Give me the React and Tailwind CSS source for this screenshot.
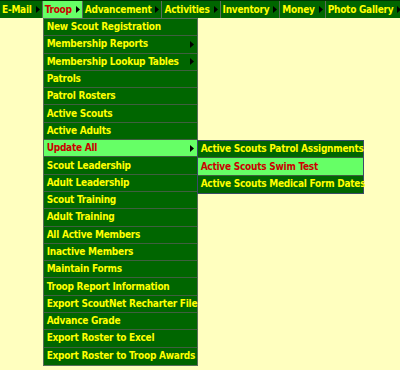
import React from 'react';

const topItems = ['E-Mail', 'Troop', 'Advancement', 'Activities', 'Inventory', 'Money', 'Photo Gallery'];

const troopItems = [
  { label: 'New Scout Registration' },
  { label: 'Membership Reports', sub: true },
  { label: 'Membership Lookup Tables', sub: true },
  { label: 'Patrols' },
  { label: 'Patrol Rosters' },
  { label: 'Active Scouts' },
  { label: 'Active Adults' },
  { label: 'Update All', sub: true, active: true },
  { label: 'Scout Leadership' },
  { label: 'Adult Leadership' },
  { label: 'Scout Training' },
  { label: 'Adult Training' },
  { label: 'All Active Members' },
  { label: 'Inactive Members' },
  { label: 'Maintain Forms' },
  { label: 'Troop Report Information' },
  { label: 'Export ScoutNet Recharter File' },
  { label: 'Advance Grade' },
  { label: 'Export Roster to Excel' },
  { label: 'Export Roster to Troop Awards' },
];

const updateItems = [
  { label: 'Active Scouts Patrol Assignments' },
  { label: 'Active Scouts Swim Test', active: true },
  { label: 'Active Scouts Medical Form Dates' },
];

const Arrow = () => (
  <svg width="4" height="7" viewBox="0 0 4 7" className="shrink-0">
    <path d="M0 0 L4 3.5 L0 7 Z" fill="#000" />
  </svg>
);

const MenuRow = ({ item, children }) => (
  <div
    className={`relative flex items-center justify-between h-[17.3px] pl-[3px] pr-[3px] border-b border-[#3f5f3f] last:border-b-0 ${
      item.active ? 'bg-[#66ff66] text-[#cc0000]' : 'bg-[#006600] text-[#ffff00]'
    }`}
  >
    <span className="whitespace-nowrap">{item.label}</span>
    {item.sub && <Arrow />}
    {children}
  </div>
);

export default function App() {
  return (
    <div
      className="w-[400px] h-[370px] bg-[#ffffbf] relative overflow-hidden font-bold text-[10px] leading-none tracking-[-0.24px]"
      style={{ fontFamily: '"DejaVu Sans Condensed", "DejaVu Sans", sans-serif', fontStretch: 'condensed' }}
    >
      {/* Top menu bar */}
      <div className="flex h-[18px] bg-[#006600] border-t border-[#003300]">
        {topItems.map((t) => (
          <div
            key={t}
            className={`relative flex items-center gap-[4px] pl-[2px] pr-[2px] border-r border-[#5a6e5a] whitespace-nowrap ${
              t === 'Troop' ? 'bg-[#66ff66] text-[#cc0000]' : 'text-[#ffff00]'
            }`}
          >
            <span>{t}</span>
            <Arrow />
            {t === 'Troop' && (
              <div className="absolute left-0 top-[17px] w-[155px] border border-[#5a6e5a] bg-[#006600] z-10">
                {troopItems.map((item) => (
                  <MenuRow key={item.label} item={item}>
                    {item.label === 'Update All' && (
                      <div className="absolute left-[153px] top-0 w-[167px] border border-[#3a4a6a] bg-[#006600] z-20">
                        {updateItems.map((u) => (
                          <MenuRow key={u.label} item={u} />
                        ))}
                      </div>
                    )}
                  </MenuRow>
                ))}
              </div>
            )}
          </div>
        ))}
      </div>
    </div>
  );
}
